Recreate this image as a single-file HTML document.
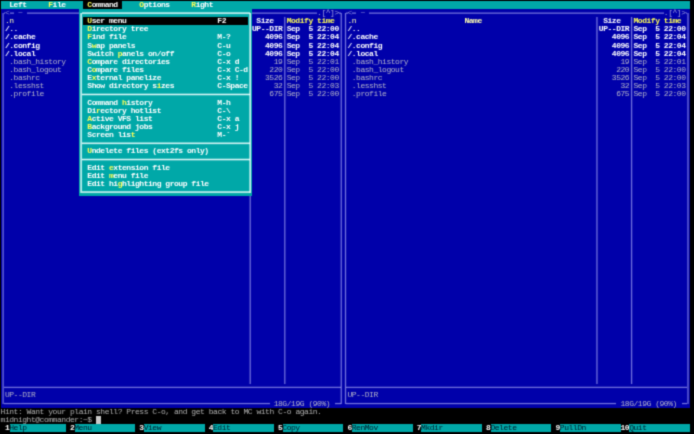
<!DOCTYPE html>
<html><head><meta charset="utf-8"><style>
html,body{margin:0;padding:0;width:694px;height:434px;overflow:hidden;background:#000}
.r{position:absolute}
.t{position:absolute;white-space:pre;transform:translate(-0.3px,0.3px) scaleY(1.0);transform-origin:0 0;font-family:"Liberation Mono",monospace;font-size:8px;line-height:8.13px;letter-spacing:-0.465px;height:8.13px}
.b{font-weight:bold}
#w{position:absolute;left:0;top:0;width:694px;height:434px;will-change:transform;filter:url(#cm)}
</style></head><body><svg style="position:absolute;width:0;height:0"><defs><filter id="cm" x="0" y="0" width="100%" height="100%" color-interpolation-filters="sRGB"><feConvolveMatrix order="3" kernelMatrix="1 4 1 4 16 4 1 4 1" divisor="36" edgeMode="duplicate"/></filter></defs></svg><div id="w">
<div class="r" style="left:0;top:0;width:694px;height:434px;background:#000"></div>
<div class="r" style="left:0.9px;top:0.9px;width:689.26px;height:8.13px;background:#00a8a8"></div>
<div class="r" style="left:0.9px;top:9.04px;width:342.46px;height:398.62px;background:#0000aa"></div>
<div class="r" style="left:2px;top:12.6px;width:1px;height:391.48px;background:rgba(190,190,255,0.321)"></div>
<div class="r" style="left:3px;top:12.6px;width:1px;height:391.48px;background:rgba(190,190,255,0.424)"></div>
<div class="r" style="left:340px;top:12.6px;width:1px;height:391.48px;background:rgba(190,190,255,0.225)"></div>
<div class="r" style="left:341px;top:12.6px;width:1px;height:391.48px;background:rgba(190,190,255,0.514)"></div>
<div class="r" style="left:3.67px;top:12px;width:1.57px;height:1px;background:rgba(190,190,255,0.294)"></div>
<div class="r" style="left:3.67px;top:13px;width:1.57px;height:1px;background:rgba(190,190,255,0.450)"></div>
<div class="r" style="left:9.57px;top:12px;width:4.33px;height:1px;background:rgba(190,190,255,0.294)"></div>
<div class="r" style="left:9.57px;top:13px;width:4.33px;height:1px;background:rgba(190,190,255,0.450)"></div>
<div class="r" style="left:26.91px;top:12px;width:290.44px;height:1px;background:rgba(190,190,255,0.294)"></div>
<div class="r" style="left:26.91px;top:13px;width:290.44px;height:1px;background:rgba(190,190,255,0.450)"></div>
<div class="r" style="left:339.03px;top:12px;width:1.57px;height:1px;background:rgba(190,190,255,0.294)"></div>
<div class="r" style="left:339.03px;top:13px;width:1.57px;height:1px;background:rgba(190,190,255,0.450)"></div>
<div class="t" style="left:5.24px;top:9.04px;color:#8c8cd8">&lt;</div>
<div class="t" style="left:18.24px;top:9.04px;color:#8c8cd8">~</div>
<div class="t" style="left:317.35px;top:9.04px;color:#a0a0e0">.[^]&gt;</div>
<div class="r" style="left:3.67px;top:386px;width:336.93px;height:1px;background:rgba(190,190,255,0.152)"></div>
<div class="r" style="left:3.67px;top:387px;width:336.93px;height:1px;background:rgba(190,190,255,0.575)"></div>
<div class="r" style="left:3.67px;top:388px;width:336.93px;height:1px;background:rgba(190,190,255,0.023)"></div>
<div class="r" style="left:3.67px;top:402px;width:266px;height:1px;background:rgba(190,190,255,0.043)"></div>
<div class="r" style="left:3.67px;top:403px;width:266px;height:1px;background:rgba(190,190,255,0.607)"></div>
<div class="r" style="left:3.67px;top:404px;width:266px;height:1px;background:rgba(190,190,255,0.099)"></div>
<div class="r" style="left:334.69px;top:402px;width:5.9px;height:1px;background:rgba(190,190,255,0.043)"></div>
<div class="r" style="left:334.69px;top:403px;width:5.9px;height:1px;background:rgba(190,190,255,0.607)"></div>
<div class="r" style="left:334.69px;top:404px;width:5.9px;height:1px;background:rgba(190,190,255,0.099)"></div>
<div class="t" style="left:274px;top:399.51px;color:#b4b4c8">18G/19G (90%)</div>
<div class="r" style="left:249px;top:16.67px;width:1px;height:367.07px;background:rgba(190,190,255,0.250)"></div>
<div class="r" style="left:250px;top:16.67px;width:1px;height:367.07px;background:rgba(190,190,255,0.492)"></div>
<div class="r" style="left:284px;top:16.67px;width:1px;height:367.07px;background:rgba(190,190,255,0.488)"></div>
<div class="r" style="left:285px;top:16.67px;width:1px;height:367.07px;background:rgba(190,190,255,0.254)"></div>
<div class="t" style="left:5.24px;top:17.17px;color:#ffffb0">.n</div>
<div class="t b" style="left:122.28px;top:17.17px;color:#ffffb0">Name</div>
<div class="t b" style="left:256.66px;top:17.17px;color:#ffffff">Size</div>
<div class="t b" style="left:287.01px;top:17.17px;color:#ffff55">Modify time</div>
<div class="t b" style="left:5.24px;top:25.3px;color:#ffffff">/..</div>
<div class="t b" style="left:252.33px;top:25.3px;color:#ffffff">UP--DIR</div>
<div class="t b" style="left:287.01px;top:25.3px;color:#ffffff">Sep  5 22:00</div>
<div class="t b" style="left:5.24px;top:33.44px;color:#ffffff">/.cache</div>
<div class="t b" style="left:265.33px;top:33.44px;color:#ffffff">4096</div>
<div class="t b" style="left:287.01px;top:33.44px;color:#ffffff">Sep  5 22:04</div>
<div class="t b" style="left:5.24px;top:41.57px;color:#ffffff">/.config</div>
<div class="t b" style="left:265.33px;top:41.57px;color:#ffffff">4096</div>
<div class="t b" style="left:287.01px;top:41.57px;color:#ffffff">Sep  5 22:04</div>
<div class="t b" style="left:5.24px;top:49.71px;color:#ffffff">/.local</div>
<div class="t b" style="left:265.33px;top:49.71px;color:#ffffff">4096</div>
<div class="t b" style="left:287.01px;top:49.71px;color:#ffffff">Sep  5 22:04</div>
<div class="t" style="left:5.24px;top:57.84px;color:#b4b4c8"> .bash_history</div>
<div class="t" style="left:274px;top:57.84px;color:#b4b4c8">19</div>
<div class="t" style="left:287.01px;top:57.84px;color:#b4b4c8">Sep  5 22:01</div>
<div class="t" style="left:5.24px;top:65.98px;color:#b4b4c8"> .bash_logout</div>
<div class="t" style="left:269.67px;top:65.98px;color:#b4b4c8">220</div>
<div class="t" style="left:287.01px;top:65.98px;color:#b4b4c8">Sep  5 22:00</div>
<div class="t" style="left:5.24px;top:74.12px;color:#b4b4c8"> .bashrc</div>
<div class="t" style="left:265.33px;top:74.12px;color:#b4b4c8">3526</div>
<div class="t" style="left:287.01px;top:74.12px;color:#b4b4c8">Sep  5 22:00</div>
<div class="t" style="left:5.24px;top:82.25px;color:#b4b4c8"> .lesshst</div>
<div class="t" style="left:274px;top:82.25px;color:#b4b4c8">32</div>
<div class="t" style="left:287.01px;top:82.25px;color:#b4b4c8">Sep  5 22:03</div>
<div class="t" style="left:5.24px;top:90.39px;color:#b4b4c8"> .profile</div>
<div class="t" style="left:269.67px;top:90.39px;color:#b4b4c8">675</div>
<div class="t" style="left:287.01px;top:90.39px;color:#b4b4c8">Sep  5 22:00</div>
<div class="t" style="left:5.24px;top:391.38px;color:#b4b4c8">UP--DIR</div>
<div class="r" style="left:343.36px;top:9.04px;width:346.8px;height:398.62px;background:#0000aa"></div>
<div class="r" style="left:344px;top:12.6px;width:1px;height:391.48px;background:rgba(190,190,255,0.057)"></div>
<div class="r" style="left:345px;top:12.6px;width:1px;height:391.48px;background:rgba(190,190,255,0.614)"></div>
<div class="r" style="left:346px;top:12.6px;width:1px;height:391.48px;background:rgba(190,190,255,0.079)"></div>
<div class="r" style="left:687px;top:12.6px;width:1px;height:391.48px;background:rgba(190,190,255,0.375)"></div>
<div class="r" style="left:688px;top:12.6px;width:1px;height:391.48px;background:rgba(190,190,255,0.371)"></div>
<div class="r" style="left:346.13px;top:12px;width:1.57px;height:1px;background:rgba(190,190,255,0.294)"></div>
<div class="r" style="left:346.13px;top:13px;width:1.57px;height:1px;background:rgba(190,190,255,0.450)"></div>
<div class="r" style="left:352.03px;top:12px;width:4.33px;height:1px;background:rgba(190,190,255,0.294)"></div>
<div class="r" style="left:352.03px;top:13px;width:4.33px;height:1px;background:rgba(190,190,255,0.450)"></div>
<div class="r" style="left:369.38px;top:12px;width:294.78px;height:1px;background:rgba(190,190,255,0.294)"></div>
<div class="r" style="left:369.38px;top:13px;width:294.78px;height:1px;background:rgba(190,190,255,0.450)"></div>
<div class="r" style="left:685.83px;top:12px;width:1.57px;height:1px;background:rgba(190,190,255,0.294)"></div>
<div class="r" style="left:685.83px;top:13px;width:1.57px;height:1px;background:rgba(190,190,255,0.450)"></div>
<div class="t" style="left:347.7px;top:9.04px;color:#8c8cd8">&lt;</div>
<div class="t" style="left:360.7px;top:9.04px;color:#8c8cd8">~</div>
<div class="t" style="left:664.15px;top:9.04px;color:#a0a0e0">.[^]&gt;</div>
<div class="r" style="left:346.13px;top:386px;width:341.26px;height:1px;background:rgba(190,190,255,0.152)"></div>
<div class="r" style="left:346.13px;top:387px;width:341.26px;height:1px;background:rgba(190,190,255,0.575)"></div>
<div class="r" style="left:346.13px;top:388px;width:341.26px;height:1px;background:rgba(190,190,255,0.023)"></div>
<div class="r" style="left:346.13px;top:402px;width:270.34px;height:1px;background:rgba(190,190,255,0.043)"></div>
<div class="r" style="left:346.13px;top:403px;width:270.34px;height:1px;background:rgba(190,190,255,0.607)"></div>
<div class="r" style="left:346.13px;top:404px;width:270.34px;height:1px;background:rgba(190,190,255,0.099)"></div>
<div class="r" style="left:681.5px;top:402px;width:5.9px;height:1px;background:rgba(190,190,255,0.043)"></div>
<div class="r" style="left:681.5px;top:403px;width:5.9px;height:1px;background:rgba(190,190,255,0.607)"></div>
<div class="r" style="left:681.5px;top:404px;width:5.9px;height:1px;background:rgba(190,190,255,0.099)"></div>
<div class="t" style="left:620.8px;top:399.51px;color:#b4b4c8">18G/19G (90%)</div>
<div class="r" style="left:596px;top:16.67px;width:1px;height:367.07px;background:rgba(190,190,255,0.402)"></div>
<div class="r" style="left:597px;top:16.67px;width:1px;height:367.07px;background:rgba(190,190,255,0.344)"></div>
<div class="r" style="left:630px;top:16.67px;width:1px;height:367.07px;background:rgba(190,190,255,0.031)"></div>
<div class="r" style="left:631px;top:16.67px;width:1px;height:367.07px;background:rgba(190,190,255,0.592)"></div>
<div class="r" style="left:632px;top:16.67px;width:1px;height:367.07px;background:rgba(190,190,255,0.128)"></div>
<div class="t" style="left:347.7px;top:17.17px;color:#ffffb0">.n</div>
<div class="t b" style="left:464.74px;top:17.17px;color:#ffffb0">Name</div>
<div class="t b" style="left:603.46px;top:17.17px;color:#ffffff">Size</div>
<div class="t b" style="left:633.81px;top:17.17px;color:#ffff55">Modify time</div>
<div class="t b" style="left:347.7px;top:25.3px;color:#ffffff">/..</div>
<div class="t b" style="left:599.13px;top:25.3px;color:#ffffff">UP--DIR</div>
<div class="t b" style="left:633.81px;top:25.3px;color:#ffffff">Sep  5 22:00</div>
<div class="t b" style="left:347.7px;top:33.44px;color:#ffffff">/.cache</div>
<div class="t b" style="left:612.13px;top:33.44px;color:#ffffff">4096</div>
<div class="t b" style="left:633.81px;top:33.44px;color:#ffffff">Sep  5 22:04</div>
<div class="t b" style="left:347.7px;top:41.57px;color:#ffffff">/.config</div>
<div class="t b" style="left:612.13px;top:41.57px;color:#ffffff">4096</div>
<div class="t b" style="left:633.81px;top:41.57px;color:#ffffff">Sep  5 22:04</div>
<div class="t b" style="left:347.7px;top:49.71px;color:#ffffff">/.local</div>
<div class="t b" style="left:612.13px;top:49.71px;color:#ffffff">4096</div>
<div class="t b" style="left:633.81px;top:49.71px;color:#ffffff">Sep  5 22:04</div>
<div class="t" style="left:347.7px;top:57.84px;color:#b4b4c8"> .bash_history</div>
<div class="t" style="left:620.8px;top:57.84px;color:#b4b4c8">19</div>
<div class="t" style="left:633.81px;top:57.84px;color:#b4b4c8">Sep  5 22:01</div>
<div class="t" style="left:347.7px;top:65.98px;color:#b4b4c8"> .bash_logout</div>
<div class="t" style="left:616.47px;top:65.98px;color:#b4b4c8">220</div>
<div class="t" style="left:633.81px;top:65.98px;color:#b4b4c8">Sep  5 22:00</div>
<div class="t" style="left:347.7px;top:74.12px;color:#b4b4c8"> .bashrc</div>
<div class="t" style="left:612.13px;top:74.12px;color:#b4b4c8">3526</div>
<div class="t" style="left:633.81px;top:74.12px;color:#b4b4c8">Sep  5 22:00</div>
<div class="t" style="left:347.7px;top:82.25px;color:#b4b4c8"> .lesshst</div>
<div class="t" style="left:620.8px;top:82.25px;color:#b4b4c8">32</div>
<div class="t" style="left:633.81px;top:82.25px;color:#b4b4c8">Sep  5 22:03</div>
<div class="t" style="left:347.7px;top:90.39px;color:#b4b4c8"> .profile</div>
<div class="t" style="left:616.47px;top:90.39px;color:#b4b4c8">675</div>
<div class="t" style="left:633.81px;top:90.39px;color:#b4b4c8">Sep  5 22:00</div>
<div class="t" style="left:347.7px;top:391.38px;color:#b4b4c8">UP--DIR</div>
<div class="t b" style="left:9.57px;top:0.9px;color:#ffffff">L</div>
<div class="t b" style="left:13.9px;top:0.9px;color:#ffffff">e</div>
<div class="t b" style="left:18.24px;top:0.9px;color:#ffffff">f</div>
<div class="t b" style="left:22.57px;top:0.9px;color:#ffffff">t</div>
<div class="t b" style="left:48.59px;top:0.9px;color:#ffff55">F</div>
<div class="t b" style="left:52.92px;top:0.9px;color:#ffffff">i</div>
<div class="t b" style="left:57.25px;top:0.9px;color:#ffffff">l</div>
<div class="t b" style="left:61.59px;top:0.9px;color:#ffffff">e</div>
<div class="r" style="left:83.27px;top:0.9px;width:39.02px;height:8.13px;background:#000000"></div>
<div class="t b" style="left:87.6px;top:0.9px;color:#ffff55">C</div>
<div class="t b" style="left:91.94px;top:0.9px;color:#ffffff">o</div>
<div class="t b" style="left:96.27px;top:0.9px;color:#ffffff">m</div>
<div class="t b" style="left:100.61px;top:0.9px;color:#ffffff">m</div>
<div class="t b" style="left:104.94px;top:0.9px;color:#ffffff">a</div>
<div class="t b" style="left:109.28px;top:0.9px;color:#ffffff">n</div>
<div class="t b" style="left:113.61px;top:0.9px;color:#ffffff">d</div>
<div class="t b" style="left:139.62px;top:0.9px;color:#ffff55">O</div>
<div class="t b" style="left:143.96px;top:0.9px;color:#ffffff">p</div>
<div class="t b" style="left:148.29px;top:0.9px;color:#ffffff">t</div>
<div class="t b" style="left:152.62px;top:0.9px;color:#ffffff">i</div>
<div class="t b" style="left:156.96px;top:0.9px;color:#ffffff">o</div>
<div class="t b" style="left:161.3px;top:0.9px;color:#ffffff">n</div>
<div class="t b" style="left:165.63px;top:0.9px;color:#ffffff">s</div>
<div class="t b" style="left:191.64px;top:0.9px;color:#ffff55">R</div>
<div class="t b" style="left:195.97px;top:0.9px;color:#ffffff">i</div>
<div class="t b" style="left:200.31px;top:0.9px;color:#ffffff">g</div>
<div class="t b" style="left:204.65px;top:0.9px;color:#ffffff">h</div>
<div class="t b" style="left:208.98px;top:0.9px;color:#ffffff">t</div>
<div class="r" style="left:78.93px;top:9.04px;width:173.4px;height:187.1px;background:#00a8a8"></div>
<div class="r" style="left:80px;top:12.6px;width:1px;height:179.97px;background:rgba(240,255,255,0.592)"></div>
<div class="r" style="left:81px;top:12.6px;width:1px;height:179.97px;background:rgba(240,255,255,0.751)"></div>
<div class="r" style="left:82px;top:12.6px;width:1px;height:179.97px;background:rgba(240,255,255,0.045)"></div>
<div class="r" style="left:249px;top:12.6px;width:1px;height:179.97px;background:rgba(240,255,255,0.534)"></div>
<div class="r" style="left:250px;top:12.6px;width:1px;height:179.97px;background:rgba(240,255,255,0.795)"></div>
<div class="r" style="left:251px;top:12.6px;width:1px;height:179.97px;background:rgba(240,255,255,0.063)"></div>
<div class="r" style="left:81.7px;top:12px;width:167.87px;height:1px;background:rgba(240,255,255,0.587)"></div>
<div class="r" style="left:81.7px;top:13px;width:167.87px;height:1px;background:rgba(240,255,255,0.754)"></div>
<div class="r" style="left:81.7px;top:14px;width:167.87px;height:1px;background:rgba(240,255,255,0.046)"></div>
<div class="r" style="left:81.7px;top:191px;width:167.87px;height:1px;background:rgba(240,255,255,0.614)"></div>
<div class="r" style="left:81.7px;top:192px;width:167.87px;height:1px;background:rgba(240,255,255,0.732)"></div>
<div class="r" style="left:81.7px;top:193px;width:167.87px;height:1px;background:rgba(240,255,255,0.039)"></div>
<div class="r" style="left:81.7px;top:93px;width:167.87px;height:1px;background:rgba(240,255,255,0.281)"></div>
<div class="r" style="left:81.7px;top:94px;width:167.87px;height:1px;background:rgba(240,255,255,0.907)"></div>
<div class="r" style="left:81.7px;top:95px;width:167.87px;height:1px;background:rgba(240,255,255,0.211)"></div>
<div class="r" style="left:81.7px;top:142px;width:167.87px;height:1px;background:rgba(240,255,255,0.444)"></div>
<div class="r" style="left:81.7px;top:143px;width:167.87px;height:1px;background:rgba(240,255,255,0.851)"></div>
<div class="r" style="left:81.7px;top:144px;width:167.87px;height:1px;background:rgba(240,255,255,0.102)"></div>
<div class="r" style="left:81.7px;top:158px;width:167.87px;height:1px;background:rgba(240,255,255,0.221)"></div>
<div class="r" style="left:81.7px;top:159px;width:167.87px;height:1px;background:rgba(240,255,255,0.908)"></div>
<div class="r" style="left:81.7px;top:160px;width:167.87px;height:1px;background:rgba(240,255,255,0.270)"></div>
<div class="r" style="left:83.27px;top:17.17px;width:164.73px;height:8.13px;background:#000000"></div>
<div class="t b" style="left:87.6px;top:17.17px;color:#ffff55">U</div>
<div class="t b" style="left:91.94px;top:17.17px;color:#ffffff">s</div>
<div class="t b" style="left:96.27px;top:17.17px;color:#ffffff">e</div>
<div class="t b" style="left:100.61px;top:17.17px;color:#ffffff">r</div>
<div class="t b" style="left:109.28px;top:17.17px;color:#ffffff">m</div>
<div class="t b" style="left:113.61px;top:17.17px;color:#ffffff">e</div>
<div class="t b" style="left:117.95px;top:17.17px;color:#ffffff">n</div>
<div class="t b" style="left:122.28px;top:17.17px;color:#ffffff">u</div>
<div class="t b" style="left:217.65px;top:17.17px;color:#ffffff">F2</div>
<div class="t b" style="left:87.6px;top:25.3px;color:#ffff55">D</div>
<div class="t b" style="left:91.94px;top:25.3px;color:#ffffff">i</div>
<div class="t b" style="left:96.27px;top:25.3px;color:#ffffff">r</div>
<div class="t b" style="left:100.61px;top:25.3px;color:#ffffff">e</div>
<div class="t b" style="left:104.94px;top:25.3px;color:#ffffff">c</div>
<div class="t b" style="left:109.28px;top:25.3px;color:#ffffff">t</div>
<div class="t b" style="left:113.61px;top:25.3px;color:#ffffff">o</div>
<div class="t b" style="left:117.95px;top:25.3px;color:#ffffff">r</div>
<div class="t b" style="left:122.28px;top:25.3px;color:#ffffff">y</div>
<div class="t b" style="left:130.95px;top:25.3px;color:#ffffff">t</div>
<div class="t b" style="left:135.28px;top:25.3px;color:#ffffff">r</div>
<div class="t b" style="left:139.62px;top:25.3px;color:#ffffff">e</div>
<div class="t b" style="left:143.96px;top:25.3px;color:#ffffff">e</div>
<div class="t b" style="left:87.6px;top:33.44px;color:#ffff55">F</div>
<div class="t b" style="left:91.94px;top:33.44px;color:#ffffff">i</div>
<div class="t b" style="left:96.27px;top:33.44px;color:#ffffff">n</div>
<div class="t b" style="left:100.61px;top:33.44px;color:#ffffff">d</div>
<div class="t b" style="left:109.28px;top:33.44px;color:#ffffff">f</div>
<div class="t b" style="left:113.61px;top:33.44px;color:#ffffff">i</div>
<div class="t b" style="left:117.95px;top:33.44px;color:#ffffff">l</div>
<div class="t b" style="left:122.28px;top:33.44px;color:#ffffff">e</div>
<div class="t b" style="left:217.65px;top:33.44px;color:#ffffff">M-?</div>
<div class="t b" style="left:87.6px;top:41.57px;color:#ffffff">S</div>
<div class="t b" style="left:91.94px;top:41.57px;color:#ffff55">w</div>
<div class="t b" style="left:96.27px;top:41.57px;color:#ffffff">a</div>
<div class="t b" style="left:100.61px;top:41.57px;color:#ffffff">p</div>
<div class="t b" style="left:109.28px;top:41.57px;color:#ffffff">p</div>
<div class="t b" style="left:113.61px;top:41.57px;color:#ffffff">a</div>
<div class="t b" style="left:117.95px;top:41.57px;color:#ffffff">n</div>
<div class="t b" style="left:122.28px;top:41.57px;color:#ffffff">e</div>
<div class="t b" style="left:126.62px;top:41.57px;color:#ffffff">l</div>
<div class="t b" style="left:130.95px;top:41.57px;color:#ffffff">s</div>
<div class="t b" style="left:217.65px;top:41.57px;color:#ffffff">C-u</div>
<div class="t b" style="left:87.6px;top:49.71px;color:#ffffff">S</div>
<div class="t b" style="left:91.94px;top:49.71px;color:#ffffff">w</div>
<div class="t b" style="left:96.27px;top:49.71px;color:#ffffff">i</div>
<div class="t b" style="left:100.61px;top:49.71px;color:#ffffff">t</div>
<div class="t b" style="left:104.94px;top:49.71px;color:#ffffff">c</div>
<div class="t b" style="left:109.28px;top:49.71px;color:#ffffff">h</div>
<div class="t b" style="left:117.95px;top:49.71px;color:#ffff55">p</div>
<div class="t b" style="left:122.28px;top:49.71px;color:#ffffff">a</div>
<div class="t b" style="left:126.62px;top:49.71px;color:#ffffff">n</div>
<div class="t b" style="left:130.95px;top:49.71px;color:#ffffff">e</div>
<div class="t b" style="left:135.28px;top:49.71px;color:#ffffff">l</div>
<div class="t b" style="left:139.62px;top:49.71px;color:#ffffff">s</div>
<div class="t b" style="left:148.29px;top:49.71px;color:#ffffff">o</div>
<div class="t b" style="left:152.62px;top:49.71px;color:#ffffff">n</div>
<div class="t b" style="left:156.96px;top:49.71px;color:#ffffff">/</div>
<div class="t b" style="left:161.3px;top:49.71px;color:#ffffff">o</div>
<div class="t b" style="left:165.63px;top:49.71px;color:#ffffff">f</div>
<div class="t b" style="left:169.97px;top:49.71px;color:#ffffff">f</div>
<div class="t b" style="left:217.65px;top:49.71px;color:#ffffff">C-o</div>
<div class="t b" style="left:87.6px;top:57.84px;color:#ffff55">C</div>
<div class="t b" style="left:91.94px;top:57.84px;color:#ffffff">o</div>
<div class="t b" style="left:96.27px;top:57.84px;color:#ffffff">m</div>
<div class="t b" style="left:100.61px;top:57.84px;color:#ffffff">p</div>
<div class="t b" style="left:104.94px;top:57.84px;color:#ffffff">a</div>
<div class="t b" style="left:109.28px;top:57.84px;color:#ffffff">r</div>
<div class="t b" style="left:113.61px;top:57.84px;color:#ffffff">e</div>
<div class="t b" style="left:122.28px;top:57.84px;color:#ffffff">d</div>
<div class="t b" style="left:126.62px;top:57.84px;color:#ffffff">i</div>
<div class="t b" style="left:130.95px;top:57.84px;color:#ffffff">r</div>
<div class="t b" style="left:135.28px;top:57.84px;color:#ffffff">e</div>
<div class="t b" style="left:139.62px;top:57.84px;color:#ffffff">c</div>
<div class="t b" style="left:143.96px;top:57.84px;color:#ffffff">t</div>
<div class="t b" style="left:148.29px;top:57.84px;color:#ffffff">o</div>
<div class="t b" style="left:152.62px;top:57.84px;color:#ffffff">r</div>
<div class="t b" style="left:156.96px;top:57.84px;color:#ffffff">i</div>
<div class="t b" style="left:161.3px;top:57.84px;color:#ffffff">e</div>
<div class="t b" style="left:165.63px;top:57.84px;color:#ffffff">s</div>
<div class="t b" style="left:217.65px;top:57.84px;color:#ffffff">C-x d</div>
<div class="t b" style="left:87.6px;top:65.98px;color:#ffffff">C</div>
<div class="t b" style="left:91.94px;top:65.98px;color:#ffff55">o</div>
<div class="t b" style="left:96.27px;top:65.98px;color:#ffffff">m</div>
<div class="t b" style="left:100.61px;top:65.98px;color:#ffffff">p</div>
<div class="t b" style="left:104.94px;top:65.98px;color:#ffffff">a</div>
<div class="t b" style="left:109.28px;top:65.98px;color:#ffffff">r</div>
<div class="t b" style="left:113.61px;top:65.98px;color:#ffffff">e</div>
<div class="t b" style="left:122.28px;top:65.98px;color:#ffffff">f</div>
<div class="t b" style="left:126.62px;top:65.98px;color:#ffffff">i</div>
<div class="t b" style="left:130.95px;top:65.98px;color:#ffffff">l</div>
<div class="t b" style="left:135.28px;top:65.98px;color:#ffffff">e</div>
<div class="t b" style="left:139.62px;top:65.98px;color:#ffffff">s</div>
<div class="t b" style="left:217.65px;top:65.98px;color:#ffffff">C-x C-d</div>
<div class="t b" style="left:87.6px;top:74.12px;color:#ffffff">E</div>
<div class="t b" style="left:91.94px;top:74.12px;color:#ffff55">x</div>
<div class="t b" style="left:96.27px;top:74.12px;color:#ffffff">t</div>
<div class="t b" style="left:100.61px;top:74.12px;color:#ffffff">e</div>
<div class="t b" style="left:104.94px;top:74.12px;color:#ffffff">r</div>
<div class="t b" style="left:109.28px;top:74.12px;color:#ffffff">n</div>
<div class="t b" style="left:113.61px;top:74.12px;color:#ffffff">a</div>
<div class="t b" style="left:117.95px;top:74.12px;color:#ffffff">l</div>
<div class="t b" style="left:126.62px;top:74.12px;color:#ffffff">p</div>
<div class="t b" style="left:130.95px;top:74.12px;color:#ffffff">a</div>
<div class="t b" style="left:135.28px;top:74.12px;color:#ffffff">n</div>
<div class="t b" style="left:139.62px;top:74.12px;color:#ffffff">e</div>
<div class="t b" style="left:143.96px;top:74.12px;color:#ffffff">l</div>
<div class="t b" style="left:148.29px;top:74.12px;color:#ffffff">i</div>
<div class="t b" style="left:152.62px;top:74.12px;color:#ffffff">z</div>
<div class="t b" style="left:156.96px;top:74.12px;color:#ffffff">e</div>
<div class="t b" style="left:217.65px;top:74.12px;color:#ffffff">C-x !</div>
<div class="t b" style="left:87.6px;top:82.25px;color:#ffffff">S</div>
<div class="t b" style="left:91.94px;top:82.25px;color:#ffffff">h</div>
<div class="t b" style="left:96.27px;top:82.25px;color:#ffffff">o</div>
<div class="t b" style="left:100.61px;top:82.25px;color:#ffffff">w</div>
<div class="t b" style="left:109.28px;top:82.25px;color:#ffffff">d</div>
<div class="t b" style="left:113.61px;top:82.25px;color:#ffffff">i</div>
<div class="t b" style="left:117.95px;top:82.25px;color:#ffffff">r</div>
<div class="t b" style="left:122.28px;top:82.25px;color:#ffffff">e</div>
<div class="t b" style="left:126.62px;top:82.25px;color:#ffffff">c</div>
<div class="t b" style="left:130.95px;top:82.25px;color:#ffffff">t</div>
<div class="t b" style="left:135.28px;top:82.25px;color:#ffffff">o</div>
<div class="t b" style="left:139.62px;top:82.25px;color:#ffffff">r</div>
<div class="t b" style="left:143.96px;top:82.25px;color:#ffffff">y</div>
<div class="t b" style="left:152.62px;top:82.25px;color:#ffffff">s</div>
<div class="t b" style="left:156.96px;top:82.25px;color:#ffff55">i</div>
<div class="t b" style="left:161.3px;top:82.25px;color:#ffffff">z</div>
<div class="t b" style="left:165.63px;top:82.25px;color:#ffffff">e</div>
<div class="t b" style="left:169.97px;top:82.25px;color:#ffffff">s</div>
<div class="t b" style="left:217.65px;top:82.25px;color:#ffffff">C-Space</div>
<div class="t b" style="left:87.6px;top:98.52px;color:#ffffff">C</div>
<div class="t b" style="left:91.94px;top:98.52px;color:#ffffff">o</div>
<div class="t b" style="left:96.27px;top:98.52px;color:#ffffff">m</div>
<div class="t b" style="left:100.61px;top:98.52px;color:#ffffff">m</div>
<div class="t b" style="left:104.94px;top:98.52px;color:#ffffff">a</div>
<div class="t b" style="left:109.28px;top:98.52px;color:#ffffff">n</div>
<div class="t b" style="left:113.61px;top:98.52px;color:#ffffff">d</div>
<div class="t b" style="left:122.28px;top:98.52px;color:#ffff55">h</div>
<div class="t b" style="left:126.62px;top:98.52px;color:#ffffff">i</div>
<div class="t b" style="left:130.95px;top:98.52px;color:#ffffff">s</div>
<div class="t b" style="left:135.28px;top:98.52px;color:#ffffff">t</div>
<div class="t b" style="left:139.62px;top:98.52px;color:#ffffff">o</div>
<div class="t b" style="left:143.96px;top:98.52px;color:#ffffff">r</div>
<div class="t b" style="left:148.29px;top:98.52px;color:#ffffff">y</div>
<div class="t b" style="left:217.65px;top:98.52px;color:#ffffff">M-h</div>
<div class="t b" style="left:87.6px;top:106.66px;color:#ffffff">D</div>
<div class="t b" style="left:91.94px;top:106.66px;color:#ffffff">i</div>
<div class="t b" style="left:96.27px;top:106.66px;color:#ffff55">r</div>
<div class="t b" style="left:100.61px;top:106.66px;color:#ffffff">e</div>
<div class="t b" style="left:104.94px;top:106.66px;color:#ffffff">c</div>
<div class="t b" style="left:109.28px;top:106.66px;color:#ffffff">t</div>
<div class="t b" style="left:113.61px;top:106.66px;color:#ffffff">o</div>
<div class="t b" style="left:117.95px;top:106.66px;color:#ffffff">r</div>
<div class="t b" style="left:122.28px;top:106.66px;color:#ffffff">y</div>
<div class="t b" style="left:130.95px;top:106.66px;color:#ffffff">h</div>
<div class="t b" style="left:135.28px;top:106.66px;color:#ffffff">o</div>
<div class="t b" style="left:139.62px;top:106.66px;color:#ffffff">t</div>
<div class="t b" style="left:143.96px;top:106.66px;color:#ffffff">l</div>
<div class="t b" style="left:148.29px;top:106.66px;color:#ffffff">i</div>
<div class="t b" style="left:152.62px;top:106.66px;color:#ffffff">s</div>
<div class="t b" style="left:156.96px;top:106.66px;color:#ffffff">t</div>
<div class="t b" style="left:217.65px;top:106.66px;color:#ffffff">C-\</div>
<div class="t b" style="left:87.6px;top:114.79px;color:#ffff55">A</div>
<div class="t b" style="left:91.94px;top:114.79px;color:#ffffff">c</div>
<div class="t b" style="left:96.27px;top:114.79px;color:#ffffff">t</div>
<div class="t b" style="left:100.61px;top:114.79px;color:#ffffff">i</div>
<div class="t b" style="left:104.94px;top:114.79px;color:#ffffff">v</div>
<div class="t b" style="left:109.28px;top:114.79px;color:#ffffff">e</div>
<div class="t b" style="left:117.95px;top:114.79px;color:#ffffff">V</div>
<div class="t b" style="left:122.28px;top:114.79px;color:#ffffff">F</div>
<div class="t b" style="left:126.62px;top:114.79px;color:#ffffff">S</div>
<div class="t b" style="left:135.28px;top:114.79px;color:#ffffff">l</div>
<div class="t b" style="left:139.62px;top:114.79px;color:#ffffff">i</div>
<div class="t b" style="left:143.96px;top:114.79px;color:#ffffff">s</div>
<div class="t b" style="left:148.29px;top:114.79px;color:#ffffff">t</div>
<div class="t b" style="left:217.65px;top:114.79px;color:#ffffff">C-x a</div>
<div class="t b" style="left:87.6px;top:122.92px;color:#ffff55">B</div>
<div class="t b" style="left:91.94px;top:122.92px;color:#ffffff">a</div>
<div class="t b" style="left:96.27px;top:122.92px;color:#ffffff">c</div>
<div class="t b" style="left:100.61px;top:122.92px;color:#ffffff">k</div>
<div class="t b" style="left:104.94px;top:122.92px;color:#ffffff">g</div>
<div class="t b" style="left:109.28px;top:122.92px;color:#ffffff">r</div>
<div class="t b" style="left:113.61px;top:122.92px;color:#ffffff">o</div>
<div class="t b" style="left:117.95px;top:122.92px;color:#ffffff">u</div>
<div class="t b" style="left:122.28px;top:122.92px;color:#ffffff">n</div>
<div class="t b" style="left:126.62px;top:122.92px;color:#ffffff">d</div>
<div class="t b" style="left:135.28px;top:122.92px;color:#ffffff">j</div>
<div class="t b" style="left:139.62px;top:122.92px;color:#ffffff">o</div>
<div class="t b" style="left:143.96px;top:122.92px;color:#ffffff">b</div>
<div class="t b" style="left:148.29px;top:122.92px;color:#ffffff">s</div>
<div class="t b" style="left:217.65px;top:122.92px;color:#ffffff">C-x j</div>
<div class="t b" style="left:87.6px;top:131.06px;color:#ffffff">S</div>
<div class="t b" style="left:91.94px;top:131.06px;color:#ffffff">c</div>
<div class="t b" style="left:96.27px;top:131.06px;color:#ffffff">r</div>
<div class="t b" style="left:100.61px;top:131.06px;color:#ffffff">e</div>
<div class="t b" style="left:104.94px;top:131.06px;color:#ffffff">e</div>
<div class="t b" style="left:109.28px;top:131.06px;color:#ffffff">n</div>
<div class="t b" style="left:117.95px;top:131.06px;color:#ffffff">l</div>
<div class="t b" style="left:122.28px;top:131.06px;color:#ffffff">i</div>
<div class="t b" style="left:126.62px;top:131.06px;color:#ffffff">s</div>
<div class="t b" style="left:130.95px;top:131.06px;color:#ffff55">t</div>
<div class="t b" style="left:217.65px;top:131.06px;color:#ffffff">M-`</div>
<div class="t b" style="left:87.6px;top:147.33px;color:#ffff55">U</div>
<div class="t b" style="left:91.94px;top:147.33px;color:#ffffff">n</div>
<div class="t b" style="left:96.27px;top:147.33px;color:#ffffff">d</div>
<div class="t b" style="left:100.61px;top:147.33px;color:#ffffff">e</div>
<div class="t b" style="left:104.94px;top:147.33px;color:#ffffff">l</div>
<div class="t b" style="left:109.28px;top:147.33px;color:#ffffff">e</div>
<div class="t b" style="left:113.61px;top:147.33px;color:#ffffff">t</div>
<div class="t b" style="left:117.95px;top:147.33px;color:#ffffff">e</div>
<div class="t b" style="left:126.62px;top:147.33px;color:#ffffff">f</div>
<div class="t b" style="left:130.95px;top:147.33px;color:#ffffff">i</div>
<div class="t b" style="left:135.28px;top:147.33px;color:#ffffff">l</div>
<div class="t b" style="left:139.62px;top:147.33px;color:#ffffff">e</div>
<div class="t b" style="left:143.96px;top:147.33px;color:#ffffff">s</div>
<div class="t b" style="left:152.62px;top:147.33px;color:#ffffff">(</div>
<div class="t b" style="left:156.96px;top:147.33px;color:#ffffff">e</div>
<div class="t b" style="left:161.3px;top:147.33px;color:#ffffff">x</div>
<div class="t b" style="left:165.63px;top:147.33px;color:#ffffff">t</div>
<div class="t b" style="left:169.97px;top:147.33px;color:#ffffff">2</div>
<div class="t b" style="left:174.3px;top:147.33px;color:#ffffff">f</div>
<div class="t b" style="left:178.63px;top:147.33px;color:#ffffff">s</div>
<div class="t b" style="left:187.31px;top:147.33px;color:#ffffff">o</div>
<div class="t b" style="left:191.64px;top:147.33px;color:#ffffff">n</div>
<div class="t b" style="left:195.97px;top:147.33px;color:#ffffff">l</div>
<div class="t b" style="left:200.31px;top:147.33px;color:#ffffff">y</div>
<div class="t b" style="left:204.65px;top:147.33px;color:#ffffff">)</div>
<div class="t b" style="left:87.6px;top:163.6px;color:#ffffff">E</div>
<div class="t b" style="left:91.94px;top:163.6px;color:#ffffff">d</div>
<div class="t b" style="left:96.27px;top:163.6px;color:#ffffff">i</div>
<div class="t b" style="left:100.61px;top:163.6px;color:#ffffff">t</div>
<div class="t b" style="left:109.28px;top:163.6px;color:#ffff55">e</div>
<div class="t b" style="left:113.61px;top:163.6px;color:#ffffff">x</div>
<div class="t b" style="left:117.95px;top:163.6px;color:#ffffff">t</div>
<div class="t b" style="left:122.28px;top:163.6px;color:#ffffff">e</div>
<div class="t b" style="left:126.62px;top:163.6px;color:#ffffff">n</div>
<div class="t b" style="left:130.95px;top:163.6px;color:#ffffff">s</div>
<div class="t b" style="left:135.28px;top:163.6px;color:#ffffff">i</div>
<div class="t b" style="left:139.62px;top:163.6px;color:#ffffff">o</div>
<div class="t b" style="left:143.96px;top:163.6px;color:#ffffff">n</div>
<div class="t b" style="left:152.62px;top:163.6px;color:#ffffff">f</div>
<div class="t b" style="left:156.96px;top:163.6px;color:#ffffff">i</div>
<div class="t b" style="left:161.3px;top:163.6px;color:#ffffff">l</div>
<div class="t b" style="left:165.63px;top:163.6px;color:#ffffff">e</div>
<div class="t b" style="left:87.6px;top:171.74px;color:#ffffff">E</div>
<div class="t b" style="left:91.94px;top:171.74px;color:#ffffff">d</div>
<div class="t b" style="left:96.27px;top:171.74px;color:#ffffff">i</div>
<div class="t b" style="left:100.61px;top:171.74px;color:#ffffff">t</div>
<div class="t b" style="left:109.28px;top:171.74px;color:#ffff55">m</div>
<div class="t b" style="left:113.61px;top:171.74px;color:#ffffff">e</div>
<div class="t b" style="left:117.95px;top:171.74px;color:#ffffff">n</div>
<div class="t b" style="left:122.28px;top:171.74px;color:#ffffff">u</div>
<div class="t b" style="left:130.95px;top:171.74px;color:#ffffff">f</div>
<div class="t b" style="left:135.28px;top:171.74px;color:#ffffff">i</div>
<div class="t b" style="left:139.62px;top:171.74px;color:#ffffff">l</div>
<div class="t b" style="left:143.96px;top:171.74px;color:#ffffff">e</div>
<div class="t b" style="left:87.6px;top:179.87px;color:#ffffff">E</div>
<div class="t b" style="left:91.94px;top:179.87px;color:#ffffff">d</div>
<div class="t b" style="left:96.27px;top:179.87px;color:#ffffff">i</div>
<div class="t b" style="left:100.61px;top:179.87px;color:#ffffff">t</div>
<div class="t b" style="left:109.28px;top:179.87px;color:#ffffff">h</div>
<div class="t b" style="left:113.61px;top:179.87px;color:#ffffff">i</div>
<div class="t b" style="left:117.95px;top:179.87px;color:#ffff55">g</div>
<div class="t b" style="left:122.28px;top:179.87px;color:#ffffff">h</div>
<div class="t b" style="left:126.62px;top:179.87px;color:#ffffff">l</div>
<div class="t b" style="left:130.95px;top:179.87px;color:#ffffff">i</div>
<div class="t b" style="left:135.28px;top:179.87px;color:#ffffff">g</div>
<div class="t b" style="left:139.62px;top:179.87px;color:#ffffff">h</div>
<div class="t b" style="left:143.96px;top:179.87px;color:#ffffff">t</div>
<div class="t b" style="left:148.29px;top:179.87px;color:#ffffff">i</div>
<div class="t b" style="left:152.62px;top:179.87px;color:#ffffff">n</div>
<div class="t b" style="left:156.96px;top:179.87px;color:#ffffff">g</div>
<div class="t b" style="left:165.63px;top:179.87px;color:#ffffff">g</div>
<div class="t b" style="left:169.97px;top:179.87px;color:#ffffff">r</div>
<div class="t b" style="left:174.3px;top:179.87px;color:#ffffff">o</div>
<div class="t b" style="left:178.63px;top:179.87px;color:#ffffff">u</div>
<div class="t b" style="left:182.97px;top:179.87px;color:#ffffff">p</div>
<div class="t b" style="left:191.64px;top:179.87px;color:#ffffff">f</div>
<div class="t b" style="left:195.97px;top:179.87px;color:#ffffff">i</div>
<div class="t b" style="left:200.31px;top:179.87px;color:#ffffff">l</div>
<div class="t b" style="left:204.65px;top:179.87px;color:#ffffff">e</div>
<div class="t" style="left:0.9px;top:407.65px;color:#b0b0b0">Hint: Want your plain shell? Press C-o, and get back to MC with C-o again.</div>
<div class="t" style="left:0.9px;top:415.78px;color:#b0b0b0">midnight@commander:~$</div>
<div class="r" style="left:96.27px;top:415.78px;width:4.33px;height:8.13px;background:#c8c8c8"></div>
<div class="t b" style="left:0.9px;top:423.92px;color:#ffffff"> 1</div>
<div class="r" style="left:9.57px;top:423.92px;width:56.35px;height:8.13px;background:#00a8a8"></div>
<div class="t" style="left:9.57px;top:423.92px;color:#001a2a">Help</div>
<div class="t b" style="left:65.93px;top:423.92px;color:#ffffff"> 2</div>
<div class="r" style="left:74.59px;top:423.92px;width:60.69px;height:8.13px;background:#00a8a8"></div>
<div class="t" style="left:74.59px;top:423.92px;color:#001a2a">Menu</div>
<div class="t b" style="left:135.28px;top:423.92px;color:#ffffff"> 3</div>
<div class="r" style="left:143.96px;top:423.92px;width:60.69px;height:8.13px;background:#00a8a8"></div>
<div class="t" style="left:143.96px;top:423.92px;color:#001a2a">View</div>
<div class="t b" style="left:204.65px;top:423.92px;color:#ffffff"> 4</div>
<div class="r" style="left:213.31px;top:423.92px;width:60.69px;height:8.13px;background:#00a8a8"></div>
<div class="t" style="left:213.31px;top:423.92px;color:#001a2a">Edit</div>
<div class="t b" style="left:274px;top:423.92px;color:#ffffff"> 5</div>
<div class="r" style="left:282.67px;top:423.92px;width:60.69px;height:8.13px;background:#00a8a8"></div>
<div class="t" style="left:282.67px;top:423.92px;color:#001a2a">Copy</div>
<div class="t b" style="left:343.36px;top:423.92px;color:#ffffff"> 6</div>
<div class="r" style="left:352.03px;top:423.92px;width:60.69px;height:8.13px;background:#00a8a8"></div>
<div class="t" style="left:352.03px;top:423.92px;color:#001a2a">RenMov</div>
<div class="t b" style="left:412.72px;top:423.92px;color:#ffffff"> 7</div>
<div class="r" style="left:421.39px;top:423.92px;width:60.69px;height:8.13px;background:#00a8a8"></div>
<div class="t" style="left:421.39px;top:423.92px;color:#001a2a">Mkdir</div>
<div class="t b" style="left:482.08px;top:423.92px;color:#ffffff"> 8</div>
<div class="r" style="left:490.75px;top:423.92px;width:60.69px;height:8.13px;background:#00a8a8"></div>
<div class="t" style="left:490.75px;top:423.92px;color:#001a2a">Delete</div>
<div class="t b" style="left:551.44px;top:423.92px;color:#ffffff"> 9</div>
<div class="r" style="left:560.12px;top:423.92px;width:60.69px;height:8.13px;background:#00a8a8"></div>
<div class="t" style="left:560.12px;top:423.92px;color:#001a2a">PullDn</div>
<div class="t b" style="left:620.8px;top:423.92px;color:#ffffff">10</div>
<div class="r" style="left:629.48px;top:423.92px;width:60.69px;height:8.13px;background:#00a8a8"></div>
<div class="t" style="left:629.48px;top:423.92px;color:#001a2a">Quit</div>
</div></body></html>
